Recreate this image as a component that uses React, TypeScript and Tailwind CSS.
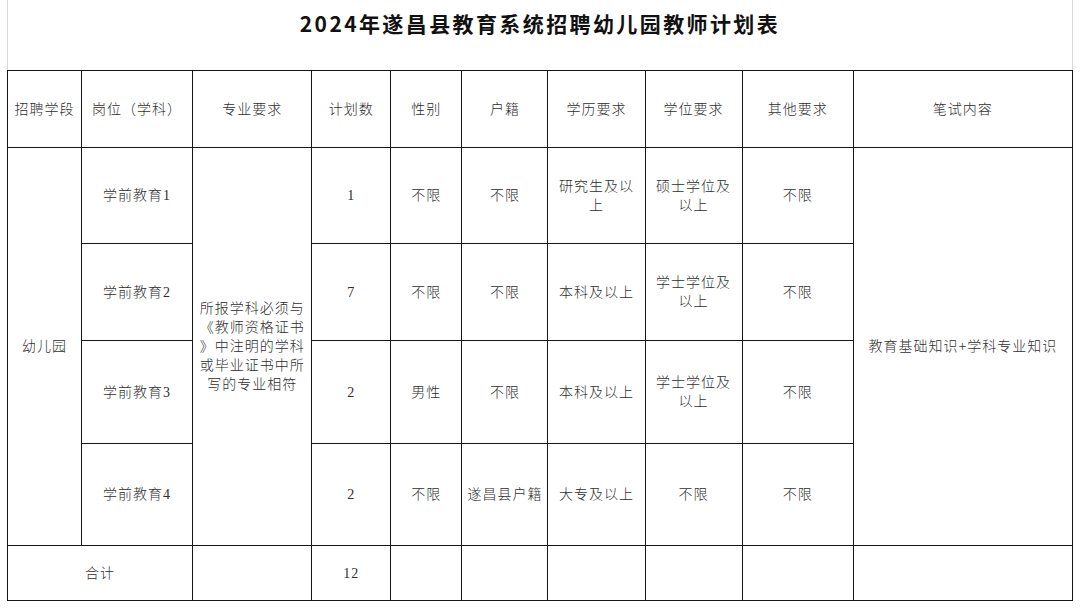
import React from "react";

const cell =
  "border border-[#161616] text-center align-middle p-0 text-[14px] tracking-[1px] text-[#2e2e2e]";

function Lines({ lines }: { lines: string[] }) {
  return (
    <div className="leading-[19px]">
      {lines.map((l, i) => (
        <div key={i}>{l}</div>
      ))}
    </div>
  );
}

export default function App() {
  const headers = [
    "招聘学段",
    "岗位（学科）",
    "专业要求",
    "计划数",
    "性别",
    "户籍",
    "学历要求",
    "学位要求",
    "其他要求",
    "笔试内容",
  ];
  const widths = [74, 111, 119, 79, 71, 86, 97, 97, 111, 219];
  return (
    <div className="w-[1080px] h-[608px] bg-white overflow-hidden">
      <div className="ml-[7px] w-[1066px] border-x border-[#d9d9d9]">
        <div className="h-[70px] flex items-start justify-center pt-[8px]">
          <div className="font-['Noto_Sans_CJK_SC',sans-serif] font-bold text-[21px] leading-[30px] tracking-[2.4px] text-[#111]">
            2024年遂昌县教育系统招聘幼儿园教师计划表
          </div>
        </div>
      </div>
      <table className="ml-[7px] w-[1066px] table-fixed border-collapse font-['Liberation_Serif','Noto_Sans_CJK_SC',serif] font-light">
        <colgroup>
          {widths.map((w, i) => (
            <col key={i} style={{ width: w }} />
          ))}
        </colgroup>
        <tbody>
          <tr className="h-[77px]">
            {headers.map((h) => (
              <td key={h} className={cell}>
                {h}
              </td>
            ))}
          </tr>
          <tr className="h-[96px]">
            <td rowSpan={4} className={cell}>
              幼儿园
            </td>
            <td className={cell}>学前教育1</td>
            <td rowSpan={4} className={cell}>
              <Lines
                lines={[
                  "所报学科必须与",
                  "《教师资格证书",
                  "》中注明的学科",
                  "或毕业证书中所",
                  "写的专业相符",
                ]}
              />
            </td>
            <td className={cell}>1</td>
            <td className={cell}>不限</td>
            <td className={cell}>不限</td>
            <td className={cell}>
              <Lines lines={["研究生及以", "上"]} />
            </td>
            <td className={cell}>
              <Lines lines={["硕士学位及", "以上"]} />
            </td>
            <td className={cell}>不限</td>
            <td rowSpan={4} className={cell}>
              教育基础知识+学科专业知识
            </td>
          </tr>
          <tr className="h-[97px]">
            <td className={cell}>学前教育2</td>
            <td className={cell}>7</td>
            <td className={cell}>不限</td>
            <td className={cell}>不限</td>
            <td className={cell}>本科及以上</td>
            <td className={cell}>
              <Lines lines={["学士学位及", "以上"]} />
            </td>
            <td className={cell}>不限</td>
          </tr>
          <tr className="h-[103px]">
            <td className={cell}>学前教育3</td>
            <td className={cell}>2</td>
            <td className={cell}>男性</td>
            <td className={cell}>不限</td>
            <td className={cell}>本科及以上</td>
            <td className={cell}>
              <Lines lines={["学士学位及", "以上"]} />
            </td>
            <td className={cell}>不限</td>
          </tr>
          <tr className="h-[102px]">
            <td className={cell}>学前教育4</td>
            <td className={cell}>2</td>
            <td className={cell}>不限</td>
            <td className={cell}>遂昌县户籍</td>
            <td className={cell}>大专及以上</td>
            <td className={cell}>不限</td>
            <td className={cell}>不限</td>
          </tr>
          <tr className="h-[55px]">
            <td colSpan={2} className={cell}>
              合计
            </td>
            <td className={cell}></td>
            <td className={cell}>12</td>
            <td className={cell}></td>
            <td className={cell}></td>
            <td className={cell}></td>
            <td className={cell}></td>
            <td className={cell}></td>
            <td className={cell}></td>
          </tr>
        </tbody>
      </table>
    </div>
  );
}
